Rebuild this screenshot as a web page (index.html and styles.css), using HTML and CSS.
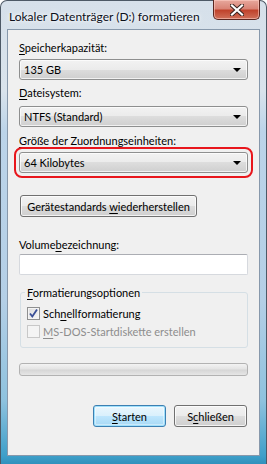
FILE: index.html
```html
<!DOCTYPE html>
<html lang="de">
<head>
  <meta charset="UTF-8" />
  <title>Lokaler Datenträger (D:) formatieren</title>
  <link rel="stylesheet" href="styles.css">
</head>
<body>
  <div class="window">
    <div class="titlebar">
      <span class="title">Lokaler Datenträger (D:) formatieren</span>
      <button class="close-btn" aria-label="Schließen">
        <svg width="14" height="12" viewBox="0 0 14 12">
          <path d="M2 1.5 L12 10.5 M12 1.5 L2 10.5" stroke="#3b2420" stroke-width="4.2" stroke-linecap="square"/>
          <path d="M2 1.5 L12 10.5 M12 1.5 L2 10.5" stroke="#fff" stroke-width="2.2" stroke-linecap="square"/>
        </svg>
      </button>
    </div>

    <div class="client">
      <label class="field-label label-first"><u>S</u>peicherkapazität:</label>
      <div class="combo"><span>135 GB</span><i class="arrow"></i></div>

      <label class="field-label"><u>D</u>ateisystem:</label>
      <div class="combo combo-mid"><span>NTFS (Standard)</span><i class="arrow"></i></div>

      <label class="field-label label-unit"><u>G</u>röße der Zuordnungseinheiten:</label>
      <div class="combo marked"><span>64 Kilobytes</span><i class="arrow"></i></div>

      <button class="btn btn-restore">Gerätestandards <u>w</u>iederherstellen</button>

      <label class="field-label label-volume">Volume<u>b</u>ezeichnung:</label>
      <div class="textbox"></div>

      <fieldset class="group">
        <legend><u>F</u>ormatierungsoptionen</legend>
        <div class="check-row">
          <span class="checkbox checked">
            <svg width="11" height="11" viewBox="0 0 11 11">
              <path d="M2 5.5 L4.3 8.5 L9 1.5" fill="none" stroke="#3a4f96" stroke-width="1.8"/>
            </svg>
          </span>
          <span>Sch<u>n</u>ellformatierung</span>
        </div>
        <div class="check-row disabled">
          <span class="checkbox"></span>
          <span><u>M</u>S-DOS-Startdiskette erstellen</span>
        </div>
      </fieldset>

      <div class="progress"></div>

      <div class="actions">
        <button class="btn btn-default"><u>S</u>tarten</button>
        <button class="btn">S<u>c</u>hließen</button>
      </div>
    </div>
  </div>
</body>
</html>
```

FILE: styles.css
```css
body {
  margin: 0;
  font-family: Lato, "Open Sans", sans-serif;
  font-size: 11px;
  color: #000;
  background: #fff;
}

u {
  text-decoration: underline;
  text-underline-offset: 2px;
}

.window {
  box-sizing: border-box;
  width: 267px;
  height: 464px;
  border: 1px solid #4d5966;
  border-bottom: none;
  border-radius: 7px 7px 0 0;
  padding: 0 6px 8px 6px;
  background: linear-gradient(to bottom, #d6e0ea 0, #d9e3ec 90px, #bcd4e9 130px, #b4cfe6 300px, #8ec2de 400px, #3e9fc9 455px, #2f8fbb 464px);
}

.titlebar {
  display: flex;
  justify-content: space-between;
  align-items: flex-start;
  height: 28px;
}

.title {
  font-size: 12px;
  padding: 8px 0 0 2px;
  color: #0b0f1a;
  text-shadow: 0 0 6px #fff, 0 0 3px #fff;
  white-space: nowrap;
}

.close-btn {
  box-sizing: border-box;
  width: 47px;
  height: 20px;
  margin: -1px 0 0 0;
  padding: 0;
  border: 1px solid #5a2620;
  border-top: none;
  border-radius: 0 0 5px 5px;
  background: linear-gradient(to bottom, #e7a89d 0, #d98476 45%, #c0432c 55%, #d0705a 100%);
  box-shadow: inset 0 0 0 1px rgba(255, 210, 200, 0.55);
  display: flex;
  align-items: center;
  justify-content: center;
}

.client {
  box-sizing: border-box;
  height: 427px;
  border: 1px solid #8798ab;
  background: #f0f0f0;
  padding: 10px 11px 0 11px;
  display: flex;
  flex-direction: column;
}

.field-label {
  height: 15px;
  line-height: 15px;
  margin-top: 5px;
  white-space: nowrap;
}

.label-first {
  margin-top: 0;
}

.label-unit {
  margin-top: 6px;
}

.combo {
  box-sizing: border-box;
  height: 21px;
  margin-top: 4px;
  border: 1px solid #8e8f8f;
  border-radius: 3px;
  background: linear-gradient(to bottom, #f2f2f2 0, #ebebeb 50%, #dddddd 50%, #cfcfcf 100%);
  box-shadow: inset 0 0 0 1px rgba(255, 255, 255, 0.7);
  display: flex;
  align-items: center;
  justify-content: space-between;
  padding: 0 6px 0 4px;
  line-height: 19px;
}

.combo-mid {
  margin-top: 6px;
}

.arrow {
  width: 0;
  height: 0;
  border-left: 4px solid transparent;
  border-right: 4px solid transparent;
  border-top: 4px solid #000;
  margin-top: 1px;
}

.marked {
  outline: 2px solid #e8161c;
  outline-offset: 3px;
}

.btn {
  box-sizing: border-box;
  height: 22px;
  padding: 0 8px;
  border: 1px solid #707070;
  border-radius: 3px;
  background: linear-gradient(to bottom, #f2f2f2 0, #ebebeb 50%, #dddddd 50%, #cfcfcf 100%);
  box-shadow: inset 0 0 0 1px rgba(255, 255, 255, 0.75);
  font: inherit;
  color: #000;
  white-space: nowrap;
}

.btn-restore {
  align-self: flex-start;
  width: 177px;
  margin: 22px 0 0 1px;
  padding: 0;
}

.label-volume {
  margin-top: 20px;
}

.textbox {
  box-sizing: border-box;
  height: 21px;
  margin-top: 2px;
  border: 1px solid #d6d9de;
  border-top-color: #abadb3;
  border-radius: 2px;
  background: #fff;
}

.group {
  margin: 10px 0 0 1px;
  padding: 4px 6px 8px 6px;
  border: 1px solid #d5dfe5;
  border-radius: 3px;
  height: 63px;
  box-sizing: border-box;
}

.group legend {
  padding: 0 2px;
  margin-left: -2px;
  line-height: 15px;
}

.check-row {
  display: flex;
  align-items: center;
  gap: 3px;
  height: 17px;
  margin-top: 1px;
}

.check-row.disabled {
  color: #8d8d8d;
}

.checkbox {
  box-sizing: border-box;
  width: 13px;
  height: 13px;
  border: 1px solid #8e8f8f;
  background: linear-gradient(135deg, #dcdcdc 0, #f8f8f8 100%);
  box-shadow: inset 0 0 0 1px #f4f4f4;
  display: flex;
  align-items: center;
  justify-content: center;
}

.check-row.disabled .checkbox {
  border-color: #c8c8c8;
  background: #f4f4f4;
}

.progress {
  box-sizing: border-box;
  height: 13px;
  margin-top: 15px;
  border: 1px solid #b2b2b2;
  border-radius: 3px;
  background: linear-gradient(to bottom, #f3f3f3 0, #e4e4e4 45%, #d6d6d6 55%, #e6e6e6 100%);
}

.actions {
  display: flex;
  justify-content: flex-end;
  gap: 8px;
  margin-top: 29px;
  padding-right: 1px;
}

.actions .btn {
  width: 73px;
}

.btn-default {
  border-color: #3c7fb1;
  background: linear-gradient(to bottom, #eaf6fd 0, #d9f0fc 50%, #bee6fd 50%, #a7d9f5 100%);
  box-shadow: inset 0 0 0 1px #9fe0fc, inset 0 0 0 2px rgba(255, 255, 255, 0.4);
}
```
